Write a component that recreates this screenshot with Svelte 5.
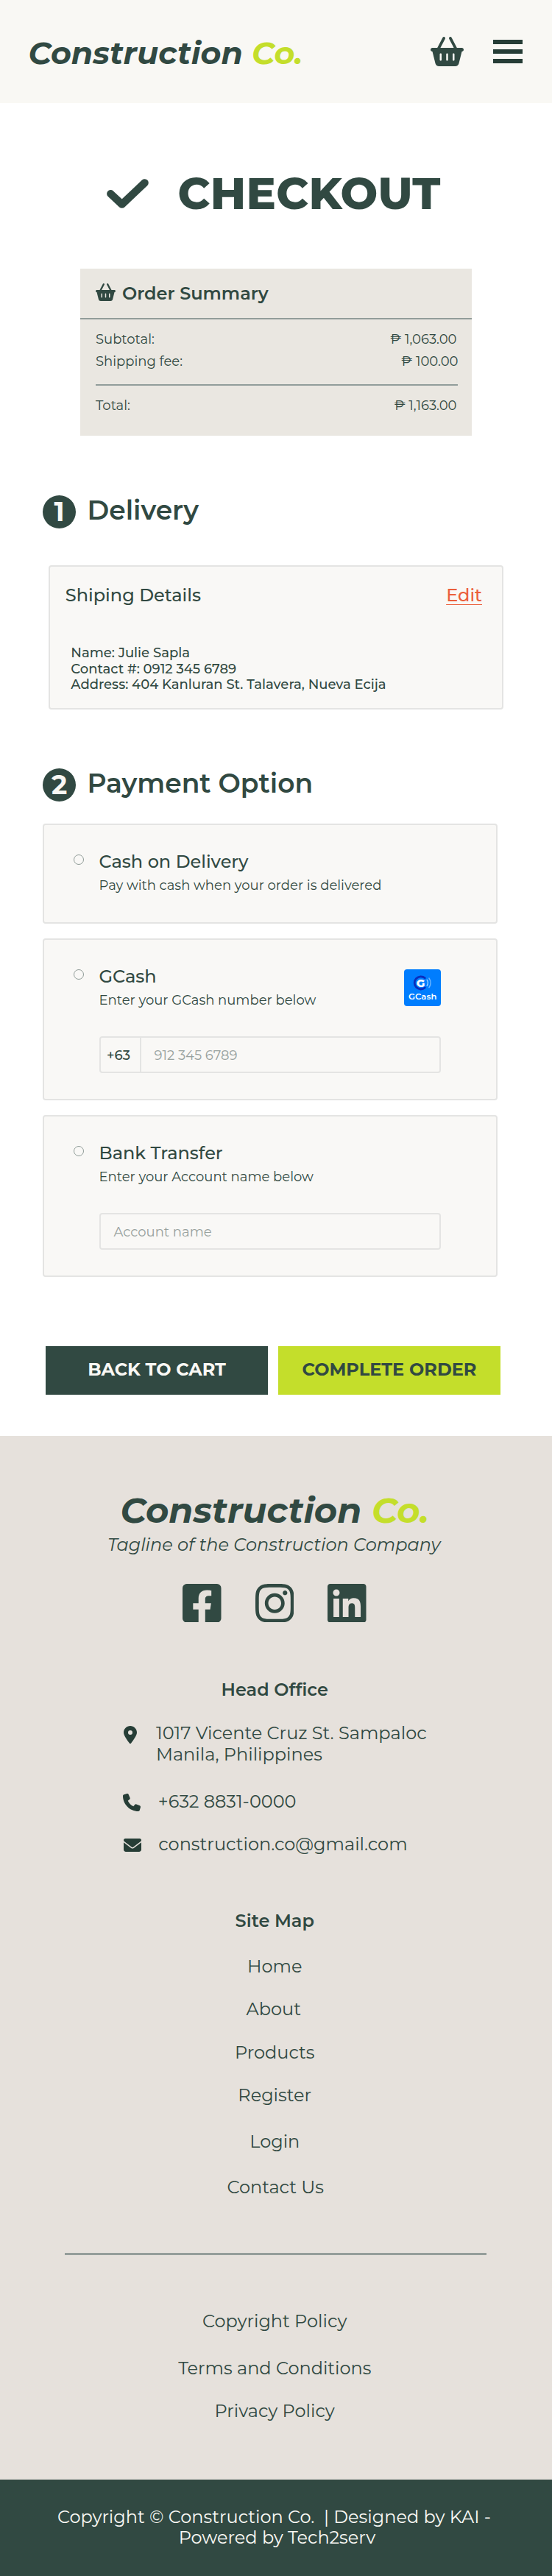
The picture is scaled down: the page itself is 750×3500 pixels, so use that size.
<script>
  const totals = [
    { label: 'Subtotal:', value: '₱ 1,063.00' },
    { label: 'Shipping fee:', value: '₱ 100.00' }
  ];
  const siteMap = ['Home', 'About', 'Products', 'Register', 'Login', 'Contact Us'];
  const legal = ['Copyright Policy', 'Terms and Conditions', 'Privacy Policy'];
</script>

{#snippet basket(cls)}
  <svg class={cls} viewBox="0 0 576 512" fill="currentColor" aria-hidden="true">
    <path d="M253.3 35.1c6.1-11.8 1.5-26.3-10.2-32.4s-26.3-1.5-32.4 10.2L117.6 192H32c-17.7 0-32 14.3-32 32s14.3 32 32 32L83.9 463.5C91 492 116.6 512 146 512H430c29.4 0 55-20 62.1-48.5L544 256c17.7 0 32-14.3 32-32s-14.3-32-32-32H458.4L365.3 12.9C359.2 1.2 344.7-3.4 332.9 2.7s-16.3 20.6-10.2 32.4L404.3 192H171.7L253.3 35.1zM192 304v96c0 8.8-7.2 16-16 16s-16-7.2-16-16V304c0-8.8 7.2-16 16-16s16 7.2 16 16zm96-16c8.8 0 16 7.2 16 16v96c0 8.8-7.2 16-16 16s-16-7.2-16-16V304c0-8.8 7.2-16 16-16zm128 16v96c0 8.8-7.2 16-16 16s-16-7.2-16-16V304c0-8.8 7.2-16 16-16s16 7.2 16 16z" />
  </svg>
{/snippet}

<div class="page">
  <header>
    <div class="logo">Construction <span>Co.</span></div>
    {@render basket('cart')}
    <div class="menu"><i></i><i></i><i></i></div>
  </header>

  <main>
    <h1>
      <svg viewBox="0 0 57 40" fill="none" stroke="currentColor" stroke-width="10.4" stroke-linecap="round" stroke-linejoin="round" aria-hidden="true"><path d="M5.3 20.3L20.7 34.6L51.6 5.4" /></svg>
      CHECKOUT
    </h1>

    <section class="summary">
      <h3>{@render basket('mini')}Order Summary</h3>
      <div class="totals">
        {#each totals as row}
          <div class="row"><span>{row.label}</span><span>{row.value}</span></div>
        {/each}
        <hr />
        <div class="row"><span>Total:</span><span>₱ 1,163.00</span></div>
      </div>
    </section>

    <h2 class="first"><b>1</b><span>Delivery</span></h2>
    <section class="card shipping">
      <div class="ship-head"><span>Shiping Details</span><u>Edit</u></div>
      <div class="info">
        <div>Name: Julie Sapla</div>
        <div>Contact #: 0912 345 6789</div>
        <div>Address: 404 Kanluran St. Talavera, Nueva Ecija</div>
      </div>
    </section>

    <h2 class="second"><b>2</b><span>Payment Option</span></h2>
    <div class="options">
      <section class="card option">
        <i class="radio"></i>
        <div class="body">
          <div class="title">Cash on Delivery</div>
          <div class="sub">Pay with cash when your order is delivered</div>
        </div>
      </section>

      <section class="card option tall">
        <i class="radio"></i>
        <div class="body">
          <div class="top">
            <div>
              <div class="title">GCash</div>
              <div class="sub">Enter your GCash number below</div>
            </div>
            <svg class="gcash" viewBox="0 0 50 50">
              <rect width="50" height="50" rx="4" fill="#007dfe" />
              <path d="M28.3 11.8A8.6 8.6 0 1 0 28.3 25" fill="none" stroke="#0a2dbd" stroke-width="2.8" stroke-linecap="round" />
              <text x="16.8" y="23.8" font-size="15" font-weight="800">G</text>
              <path d="M31.2 14.4A7.5 7.5 0 0 1 31.2 22.4" fill="none" stroke="#8cc8ff" stroke-width="1.6" stroke-linecap="round" />
              <path d="M34 12.2A10.5 10.5 0 0 1 34 24.6" fill="none" stroke="#6cb5ff" stroke-width="1.6" stroke-linecap="round" />
              <text x="6" y="40.9" font-size="11.6" font-weight="600" textLength="38.5">GCash</text>
            </svg>
          </div>
          <div class="field"><span class="prefix">+63</span><span class="hint">912 345 6789</span></div>
        </div>
      </section>

      <section class="card option tall">
        <i class="radio"></i>
        <div class="body">
          <div class="title">Bank Transfer</div>
          <div class="sub">Enter your Account name below</div>
          <div class="field"><span class="hint">Account name</span></div>
        </div>
      </section>
    </div>

    <div class="actions">
      <button class="back">BACK TO CART</button>
      <button class="complete">COMPLETE ORDER</button>
    </div>
  </main>

  <footer>
    <div class="logo big">Construction <span>Co.</span></div>
    <div class="tagline">Tagline of the Construction Company</div>
    <div class="social">
      <svg viewBox="0 32 448 448" fill="currentColor"><path d="M400 32H48A48 48 0 0 0 0 80v352a48 48 0 0 0 48 48h137.25V327.69h-63V256h63v-54.64c0-62.15 37-96.48 93.67-96.48 27.14 0 55.52 4.84 55.52 4.84v61h-31.27c-30.81 0-40.42 19.12-40.42 38.73V256h68.78l-11 71.69h-57.78V480H400a48 48 0 0 0 48-48V80a48 48 0 0 0-48-48z" /></svg>
      <svg viewBox="0 32 448 448" fill="currentColor"><path d="M224.1 141c-63.6 0-114.9 51.3-114.9 114.9s51.3 114.9 114.9 114.9S339 319.5 339 255.9 287.7 141 224.1 141zm0 189.6c-41.1 0-74.7-33.5-74.7-74.7s33.5-74.7 74.7-74.7 74.7 33.5 74.7 74.7-33.6 74.7-74.7 74.7zm146.4-194.3c0 14.9-12 26.8-26.8 26.8-14.9 0-26.8-12-26.8-26.8s12-26.8 26.8-26.8 26.8 12 26.8 26.8zm76.1 27.2c-1.7-35.9-9.9-67.7-36.2-93.9-26.2-26.2-58-34.4-93.9-36.2-37-2.1-147.9-2.1-184.9 0-35.8 1.7-67.6 9.9-93.9 36.1s-34.4 58-36.2 93.9c-2.1 37-2.1 147.9 0 184.9 1.7 35.9 9.9 67.7 36.2 93.9s58 34.4 93.9 36.2c37 2.1 147.9 2.1 184.9 0 35.9-1.7 67.7-9.9 93.9-36.2 26.2-26.2 34.4-58 36.2-93.9 2.1-37 2.1-147.8 0-184.8zM398.8 388c-7.8 19.6-22.9 34.7-42.6 42.6-29.5 11.7-99.5 9-132.1 9s-102.7 2.6-132.1-9c-19.6-7.8-34.7-22.9-42.6-42.6-11.7-29.5-9-99.5-9-132.1s-2.6-102.7 9-132.1c7.8-19.6 22.9-34.7 42.6-42.6 29.5-11.7 99.5-9 132.1-9s102.7-2.6 132.1 9c19.6 7.8 34.7 22.9 42.6 42.6 11.7 29.5 9 99.5 9 132.1s2.7 102.7-9 132.1z" /></svg>
      <svg viewBox="0 32 448 448" fill="currentColor"><path d="M416 32H31.9C14.3 32 0 46.5 0 64.3v383.4C0 465.5 14.3 480 31.9 480H416c17.6 0 32-14.5 32-32.3V64.3c0-17.8-14.4-32.3-32-32.3zM135.4 416H69V202.2h66.5V416zm-33.2-243c-21.3 0-38.5-17.3-38.5-38.5S80.9 96 102.2 96c21.2 0 38.5 17.3 38.5 38.5 0 21.3-17.2 38.5-38.5 38.5zm282.1 243h-66.4V312c0-24.8-.5-56.7-34.5-56.7-34.6 0-39.9 27-39.9 54.9V416h-66.4V202.2h63.7v29.2h.9c8.9-16.8 30.6-34.5 62.9-34.5 67.2 0 79.7 44.3 79.7 101.9V416z" /></svg>
    </div>

    <h4 class="office">Head Office</h4>
    <div class="contact">
      <svg class="pin" viewBox="0 0 384 512" fill="currentColor"><path d="M215.7 499.2C267 435 384 279.4 384 192C384 86 298 0 192 0S0 86 0 192c0 87.4 117 243 168.3 307.2c12.3 15.3 35.1 15.3 47.4 0zM192 128a64 64 0 1 1 0 128 64 64 0 1 1 0-128z" /></svg>
      <span class="address">1017 Vicente Cruz St. Sampaloc<br />Manila, Philippines</span>
      <svg class="phone" viewBox="0 0 512 512" fill="currentColor"><path d="M164.9 24.6c-7.7-18.6-28-28.5-47.4-23.2l-88 24C12.1 30.2 0 46 0 64C0 311.4 200.6 512 448 512c18 0 33.8-12.1 38.6-29.5l24-88c5.3-19.4-4.6-39.7-23.2-47.4l-96-40c-16.3-6.8-35.2-2.1-46.3 11.6L304.7 368C234.3 334.7 177.3 277.7 144 207.3L193.3 167c13.7-11.2 18.4-30 11.6-46.3l-40-96z" /></svg>
      <span class="tel">+632 8831-0000</span>
      <svg class="mail" viewBox="0 64 512 384" fill="currentColor"><path d="M48 64C21.5 64 0 85.5 0 112c0 15.1 7.1 29.3 19.2 38.4L236.8 313.6c11.4 8.5 27 8.5 38.4 0L492.8 150.4c12.1-9.1 19.2-23.3 19.2-38.4c0-26.5-21.5-48-48-48H48zM0 176V384c0 35.3 28.7 64 64 64H448c35.3 0 64-28.7 64-64V176L294.4 339.2c-22.8 17.1-54 17.1-76.8 0L0 176z" /></svg>
      <span class="email">construction.co@gmail.com</span>
    </div>

    <h4 class="map-title">Site Map</h4>
    <nav class="map">
      {#each siteMap as item}<a>{item}</a>{/each}
    </nav>
    <hr class="split" />
    <nav class="legal">
      {#each legal as item}<a>{item}</a>{/each}
    </nav>
  </footer>

  <div class="copyright">
    <div>Copyright © Construction Co.&nbsp; | Designed by KAI -</div>
    <div class="powered">Powered by Tech2serv</div>
  </div>
</div>

<style>
  :global(body) { margin: 0; background: #fff; }
  .page { width: 750px; height: 3500px; display: flex; flex-direction: column; font-family: Montserrat, Inter, sans-serif; font-size: 24px; line-height: 30px; color: #314942; box-sizing: border-box; overflow: hidden; }
  .page * { box-sizing: border-box; }
  h1, h2, h3, h4 { margin: 0; }
  svg { display: block; flex: none; }
  header { height: 140px; flex: none; background: #f9f8f4; display: flex; align-items: center; padding: 0 40px 0 38.4px; }
  .logo { font-size: 42.7px; font-weight: 700; font-style: italic; line-height: 54px; white-space: nowrap; padding-top: 4px; }
  .logo span { color: #c4de2b; }
  .cart { width: 45px; height: 40px; margin-left: auto; }
  .menu { width: 40px; margin-left: 40.5px; display: grid; gap: 7px; }
  .menu i { height: 6px; background: #263d36; }

  h1 { margin: 86.7px 0 0 145.2px; height: 72.3px; display: flex; align-items: center; gap: 39.4px; font-size: 60px; line-height: 72px; font-weight: 800; letter-spacing: 0.4px; }
  h1 svg { width: 57px; height: 40px; }

  .summary { margin: 66px 0 0 109px; width: 532px; height: 227px; background: #eae7e1; }
  h3 { height: 69px; border-bottom: 2px solid #929d9a; display: flex; align-items: center; gap: 9px; padding: 2px 21px 0; font-size: 24px; font-weight: 600; }
  .mini { width: 27px; height: 24px; margin-bottom: 5px; }
  .totals { padding: 12px 20.5px 0 21px; font-size: 18px; }
  .row { display: flex; justify-content: space-between; height: 30px; }
  .row:nth-child(2) { margin-right: -2px; }
  .totals hr { height: 2px; border: 0; background: #929d9a; margin: 16px -1px 12px 0; }

  h2 { display: flex; align-items: center; gap: 15.5px; margin-left: 58px; height: 45px; font-size: 36px; line-height: 40px; font-weight: 600; }
  h2 b { width: 45px; height: 45px; line-height: 45px; border-radius: 50%; background: #314942; color: #f9f8f4; font-weight: 700; text-align: center; }
  h2 span { padding-bottom: 5px; }
  .first { margin-top: 81px; }
  .second { margin-top: 80px; }

  .card { width: 618px; border: 2px solid #e4e4e3; border-radius: 4px; background: #f9f8f6; }
  .shipping { margin: 50px 0 0 66px; height: 196px; padding: 23.8px 27px 0 20.8px; font-weight: 500; }
  .ship-head { display: flex; justify-content: space-between; }
  .ship-head u { color: #eb5f3b; text-decoration: underline; text-decoration-thickness: 1px; text-underline-offset: 4px; text-decoration-skip-ink: none; }
  .info { margin: 53.6px 0 0 7.5px; font-size: 18px; line-height: 21.5px; }

  .options { display: grid; gap: 20px; margin: 30px 0 0 58px; }
  .option { height: 136px; display: flex; padding: 34.7px 75px 0 40px; }
  .option.tall { height: 220px; }
  .radio { width: 14px; height: 14px; border: 1px solid #8f9b97; border-radius: 50%; margin-top: 5.3px; flex: none; }
  .body { flex: 1; margin-left: 20.5px; }
  .title { font-weight: 500; }
  .sub { margin-top: 6.5px; font-size: 18px; line-height: 22px; }
  .top { display: flex; justify-content: space-between; }
  .gcash { width: 50px; height: 50px; margin-top: 5.3px; }
  .gcash text { fill: #fff; }
  .field { display: flex; align-items: stretch; width: 464px; height: 50px; margin: 37.8px 0 0 0.5px; border: 2px solid #e4e4e3; border-radius: 4px; font-size: 18px; line-height: 48px; }
  .prefix { width: 55px; border-right: 2px solid #e4e4e3; padding-left: 8px; font-weight: 500; }
  .hint { padding-left: 17.5px; color: #98a19e; }

  .actions { display: flex; gap: 14px; margin: 94px 0 0 62px; }
  button { width: 302px; height: 66px; padding: 0 0 1px; border: 0; font: inherit; font-weight: 700; }
  .back { background: #314942; color: #f9f8f4; }
  .complete { background: #c4de2b; color: #314942; }

  footer { margin-top: 56px; height: 1418px; flex: none; background: #e6e1dc; padding: 71px 3.5px 0 0; text-align: center; }
  .big { font-size: 48px; line-height: 60px; padding: 0; }
  .tagline { font-style: italic; line-height: 30px; margin-top: 1.8px; padding-right: 2px; }
  .social { display: flex; gap: 46px; margin: 38.2px 0 0 248px; }
  .social svg { width: 52.5px; height: 52.5px; }
  .office { margin-top: 76.3px; font-weight: 600; font-size: 24px; }
  .contact { display: grid; grid-template-columns: 44px 1fr; margin: 29.4px 0 0 168px; line-height: 29px; text-align: left; }
  .pin { width: 18px; height: 24px; margin-top: 4.8px; }
  .address { height: 58px; }
  .phone { width: 24px; height: 24px; margin: 38.8px 0 0 -1px; }
  .tel { margin: 35px 0 0 2.8px; }
  .mail { width: 24px; height: 18px; margin-top: 35.8px; }
  .email { margin: 29px 0 0 3.3px; }
  .pin, .phone, .mail { color: #263d36; }
  .map-title { margin-top: 74.4px; font-weight: 600; font-size: 24px; }
  nav { display: flex; flex-direction: column; align-items: center; gap: 28px; }
  .map { margin-top: 32px; }
  .map a:nth-child(2) { margin-right: 3px; }
  .map a:nth-child(3) { margin-top: 1px; }
  .map a:nth-child(5) { margin-top: 5px; }
  .map a:nth-child(6) { margin: 4px 0 0 2px; }
  .split { width: 573px; height: 3px; border: 0; background: #959e9b; margin: 74.4px 0 0 88px; }
  .legal { margin-top: 74.6px; }
  .legal a:nth-child(2) { margin-top: 6px; }
  .copyright { flex: 1; background: #314942; color: #f9f8f4; line-height: 28px; padding: 36.7px 5px 0 0; text-align: center; }
  .powered { padding-left: 8px; }
</style>
